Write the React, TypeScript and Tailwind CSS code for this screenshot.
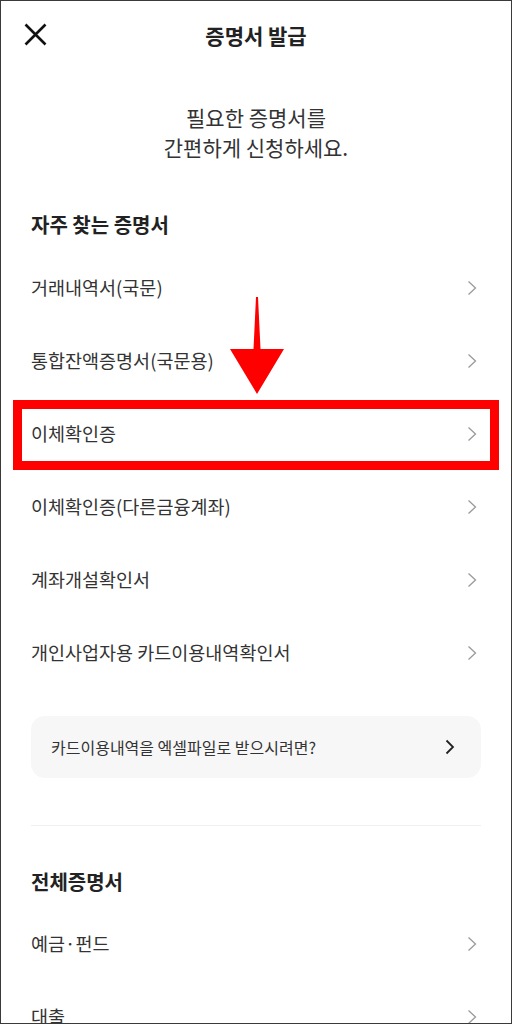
import React from "react";

const font = { fontFamily: '"Noto Sans CJK KR", "Noto Sans", sans-serif' };

function Chevron({ dark }: { dark?: boolean }) {
  return dark ? (
    <svg width="10" height="16" viewBox="0 0 10 16" fill="none">
      <path d="M1.5 1.5 L8 8 L1.5 14.5" stroke="#222" strokeWidth="1.8" />
    </svg>
  ) : (
    <svg width="10" height="16" viewBox="0 0 10 16" fill="none">
      <path d="M1.5 1.5 L8.5 8 L1.5 14.5" stroke="#9a9a9a" strokeWidth="1.3" />
    </svg>
  );
}

function Row({ label }: { label: string }) {
  return (
    <div className="flex h-[73px] items-center justify-between pl-[30px] pr-[34px]">
      <span className="text-[18.5px] text-[#333]">{label}</span>
      <Chevron />
    </div>
  );
}

export default function App() {
  return (
    <div
      className="relative h-[1024px] w-[512px] overflow-hidden border border-[#3a3a3a] bg-white"
      style={font}
    >
      {/* header */}
      <div className="relative flex h-[69px] items-center justify-center">
        <svg
          className="absolute left-[23px] top-[22px]"
          width="23"
          height="23"
          viewBox="0 0 23 23"
          fill="none"
        >
          <path d="M1.5 1.5 L21.5 21.5 M21.5 1.5 L1.5 21.5" stroke="#111" strokeWidth="2.6" />
        </svg>
        <h1 className="text-[21px] font-bold text-[#222]">증명서 발급</h1>
      </div>

      {/* subtitle */}
      <div className="mt-[32px] text-center text-[21px] leading-[30px] text-[#333]">
        <p>필요한 증명서를</p>
        <p>간편하게 신청하세요.</p>
      </div>

      {/* section 1 */}
      <h2 className="mt-[50px] pl-[30px] text-[20px] font-bold leading-[26px] text-[#222]">
        자주 찾는 증명서
      </h2>
      <div className="mt-[13px]">
        <Row label="거래내역서(국문)" />
        <Row label="통합잔액증명서(국문용)" />
        <Row label="이체확인증" />
        <Row label="이체확인증(다른금융계좌)" />
        <Row label="계좌개설확인서" />
        <Row label="개인사업자용 카드이용내역확인서" />
      </div>

      {/* card */}
      <div className="mx-[30px] mt-[27px] flex h-[62px] items-center justify-between rounded-[14px] bg-[#f7f7f7] pl-[20px] pr-[26px]">
        <span className="text-[16px] text-[#333]">카드이용내역을 엑셀파일로 받으시려면?</span>
        <Chevron dark />
      </div>

      {/* divider */}
      <div className="mx-[30px] mt-[47px] h-px bg-[#f0f0f0]" />

      {/* section 2 */}
      <h2 className="mt-[43px] pl-[30px] text-[20px] font-bold leading-[26px] text-[#222]">
        전체증명서
      </h2>
      <div className="mt-[12px]">
        <Row label="예금·펀드" />
        <Row label="대출" />
      </div>

      {/* red highlight overlay */}
      <div className="absolute left-[12px] top-[399px] h-[70px] w-[486px] border-[9px] border-[#ff0000]" />
      <svg
        className="absolute left-[225px] top-[294px]"
        width="62"
        height="102"
        viewBox="0 0 62 102"
      >
        <polygon points="30,2 32,2 34.5,54 58,54 31,99 4,54 27.5,54" fill="#ff0000" />
      </svg>
    </div>
  );
}
